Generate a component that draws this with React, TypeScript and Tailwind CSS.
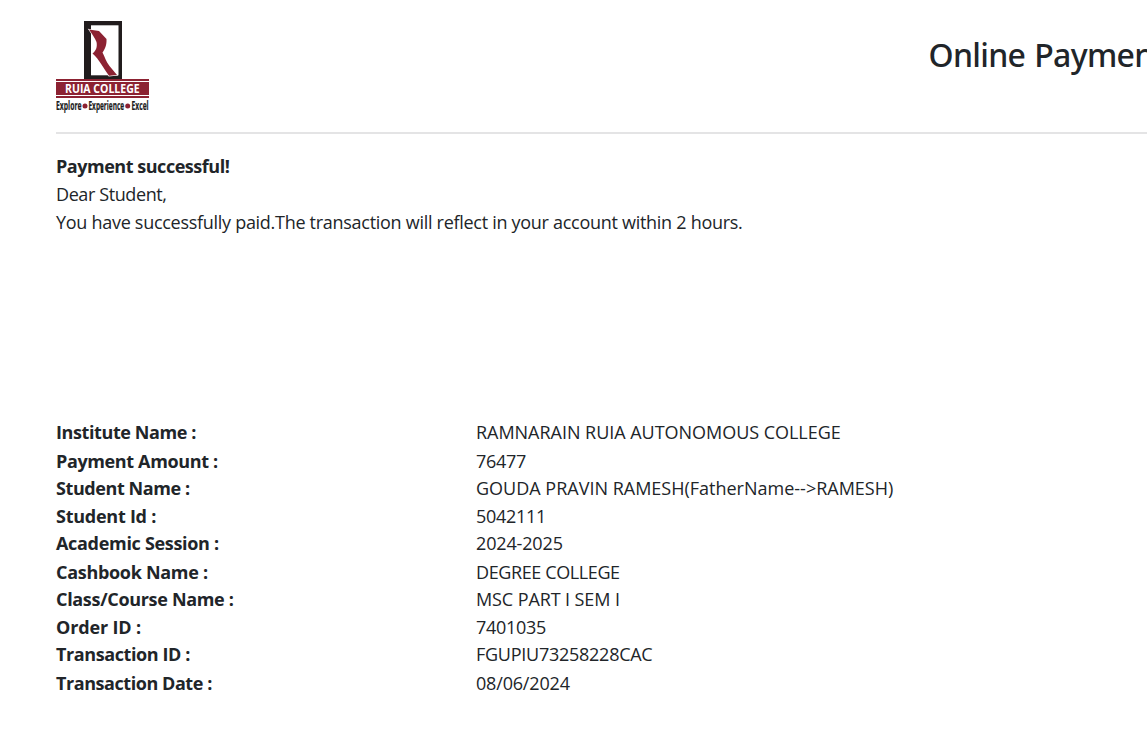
const rows = [
  { label: "Institute Name :", value: "RAMNARAIN RUIA AUTONOMOUS COLLEGE", h: "h-[29px]", l: "tracking-[-0.4px]", v: "tracking-[-0.03px]" },
  { label: "Payment Amount :", value: "76477", h: "h-[27px]", l: "tracking-[-0.37px]", v: "tracking-[-0.32px]" },
  { label: "Student Name :", value: "GOUDA PRAVIN RAMESH(FatherName-->RAMESH)", h: "h-[28px]", l: "tracking-[-0.42px]", v: "tracking-normal" },
  { label: "Student Id :", value: "5042111", h: "h-[27px]", l: "tracking-[-0.25px]", v: "tracking-[-0.28px]" },
  { label: "Academic Session :", value: "2024-2025", h: "h-[29px]", l: "tracking-[-0.31px]", v: "tracking-[-0.15px]" },
  { label: "Cashbook Name :", value: "DEGREE COLLEGE", h: "h-[27px]", l: "tracking-[-0.3px]", v: "tracking-[-0.39px]" },
  { label: "Class/Course Name :", value: "MSC PART I SEM I", h: "h-[28px]", l: "tracking-[-0.32px]", v: "tracking-[-0.1px]" },
  { label: "Order ID :", value: "7401035", h: "h-[27px]", l: "tracking-[-0.15px]", v: "tracking-[-0.28px]" },
  { label: "Transaction ID :", value: "FGUPIU73258228CAC", h: "h-[29px]", l: "tracking-[-0.4px]", v: "tracking-[-0.26px]" },
  { label: "Transaction Date :", value: "08/06/2024", h: "h-[27px]", l: "tracking-[-0.44px]", v: "tracking-[-0.18px]" },
];

function Logo() {
  return (
    <svg width="93" height="92" viewBox="0 0 93 92" role="img" aria-label="Ruia College">
      <rect x="28" y="0" width="38" height="58" fill="#211c1d" />
      <rect x="35" y="4.3" width="27.5" height="50" fill="#fff" />
      <path
        d="M33 8.5 L43 10 L50.5 18 C50.8 24 49 28 46.5 31.5 C49 36 50 41 53.5 45 L61 54 L53 54.8 C48 48 43 38 36.5 32.5 C40 30 41.5 26 40.5 21 C39 17 36 13 33 8.5Z"
        fill="#8c2232"
        stroke="#fff"
        strokeWidth="1.2"
        paintOrder="stroke"
      />
      <rect x="0" y="58" width="93" height="2" fill="#8c2232" />
      <rect x="0" y="61" width="93" height="13" fill="#8c2232" />
      <rect x="0" y="75" width="93" height="2" fill="#8c2232" />
      <text x="10" y="72.3" transform="scale(0.9 1)" textLength="83" lengthAdjust="spacingAndGlyphs" fontSize="12" fontWeight="700" fill="#fff">RUIA COLLEGE</text>
      <g fontSize="11.5" fontWeight="700" fill="#211c1d" stroke="#211c1d" strokeWidth="0.2" transform="scale(0.55 1)">
        <text x="0" y="88.8" textLength="46.4" lengthAdjust="spacingAndGlyphs">Explore</text>
        <text x="59" y="88.8" textLength="65" lengthAdjust="spacingAndGlyphs">Experience</text>
        <text x="137.5" y="88.8" textLength="31" lengthAdjust="spacingAndGlyphs">Excel</text>
      </g>
      <circle cx="29" cy="85" r="2.5" fill="#8c2232" />
      <circle cx="71.7" cy="85" r="2.5" fill="#8c2232" />
    </svg>
  );
}

export default function App() {
  return (
    <main className="h-[755px] w-[1147px] overflow-hidden bg-white pl-14 pt-[21px] font-['Open_Sans',sans-serif] text-[18px] leading-7 text-[#212529]">
      <header className="flex h-[113px] items-start justify-between border-b-2 border-[#e4e4e5]">
        <Logo />
        <h1 className="mt-3 w-[218.5px] whitespace-nowrap font-['Noto_Sans',sans-serif] text-[32px] font-medium leading-[44px] tracking-[-0.7px] [word-spacing:1.5px]">
          Online Payment
        </h1>
      </header>
      <section className="mt-[18px]">
        <p className="font-bold tracking-[-0.47px]">Payment successful!</p>
        <p className="tracking-[-0.4px]">Dear Student,</p>
        <p className="tracking-[-0.285px]">You have successfully paid.The transaction will reflect in your account within 2 hours.</p>
      </section>
      <dl className="mt-[182px]">
        {rows.map((r) => (
          <div key={r.label} className={`grid grid-cols-[420px_1fr] whitespace-nowrap ${r.h}`}>
            <dt className={`font-bold ${r.l}`}>{r.label}</dt>
            <dd className={r.v}>{r.value}</dd>
          </div>
        ))}
      </dl>
    </main>
  );
}
